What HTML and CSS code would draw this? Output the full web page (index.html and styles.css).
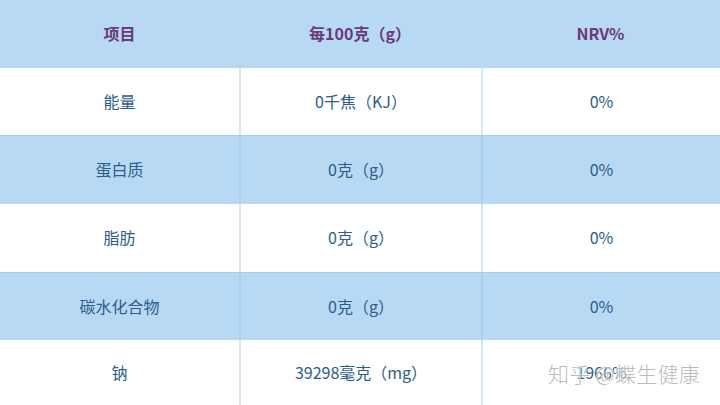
FILE: index.html
```html
<!DOCTYPE html>
<html lang="zh">
<head>
<meta charset="utf-8">
<link rel="stylesheet" href="styles.css">
</head>
<body>
<div class="table">
  <div class="row head h68">
    <div class="cell">项目</div>
    <div class="cell">每100克（g）</div>
    <div class="cell">NRV%</div>
  </div>
  <div class="row white h67">
    <div class="cell">能量</div>
    <div class="cell">0千焦（KJ）</div>
    <div class="cell">0%</div>
  </div>
  <div class="row blue h69">
    <div class="cell">蛋白质</div>
    <div class="cell">0克（g）</div>
    <div class="cell">0%</div>
  </div>
  <div class="row white h68">
    <div class="cell">脂肪</div>
    <div class="cell">0克（g）</div>
    <div class="cell">0%</div>
  </div>
  <div class="row blue h68">
    <div class="cell">碳水化合物</div>
    <div class="cell">0克（g）</div>
    <div class="cell">0%</div>
  </div>
  <div class="row white h65">
    <div class="cell">钠</div>
    <div class="cell">39298毫克（mg）</div>
    <div class="cell">1966%</div>
  </div>
</div>
<div class="watermark">知乎 @蝶生健康</div>
</body>
</html>
```
FILE: styles.css
```css
html, body {
  margin: 0;
  padding: 0;
  width: 720px;
  height: 405px;
  overflow: hidden;
  background: #ffffff;
  font-family: "Noto Sans CJK SC", "Noto Sans", sans-serif;
}
.table {
  display: flex;
  flex-direction: column;
  width: 720px;
}
.row {
  display: grid;
  grid-template-columns: 239px 242px 239px;
  box-sizing: border-box;
}
.h68 { height: 68px; }
.h67 { height: 67px; }
.h69 { height: 69px; }
.h65 { height: 65px; }
.cell {
  display: flex;
  align-items: center;
  justify-content: center;
  font-size: 16px;
  color: #2c5d8c;
  box-sizing: border-box;
  padding-bottom: 2px;
}
.head {
  background: #b8d9f4;
}
.head .cell {
  color: #6b3a7d;
  font-weight: 700;
}
.blue {
  background: #b8d9f4;
  border-top: 1px solid #a6cdef;
}
.white {
  background: #ffffff;
}
.white .cell + .cell {
  border-left: 2px solid #d6e8f7;
}
.blue .cell + .cell {
  border-left: 2px solid #a9cfef;
}
.watermark {
  position: absolute;
  left: 548px;
  top: 358px;
  font-size: 21px;
  letter-spacing: 0.3px;
  color: rgba(165, 165, 165, 0.75);
  text-shadow: 0 0 1px #fff, 0 0 2px #fff;
  font-family: "Noto Sans CJK SC", sans-serif;
  font-weight: 300;
}
```
